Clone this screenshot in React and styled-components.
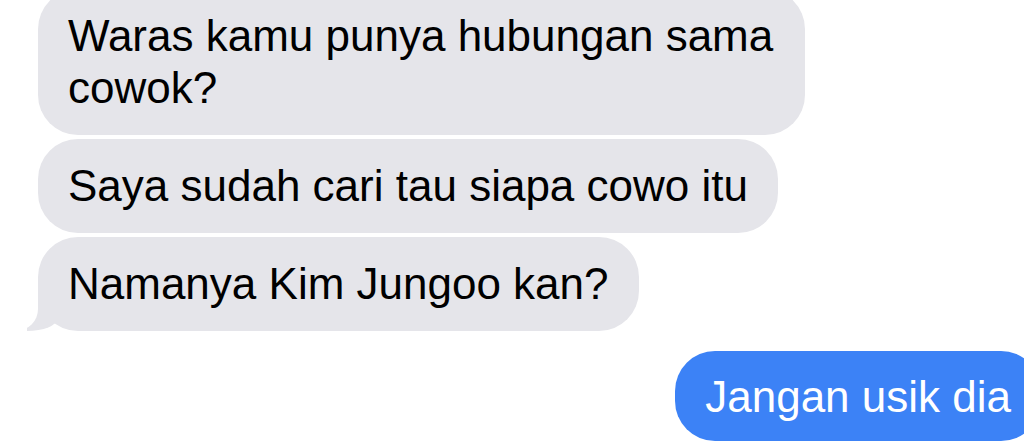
import React from 'react';
import styled, { createGlobalStyle } from 'styled-components';

const GlobalStyle = createGlobalStyle`
  html, body {
    margin: 0;
    padding: 0;
    background: #ffffff;
    overflow: hidden;
  }

  body {
    font-family: "Liberation Sans", Arial, sans-serif;
  }
`;

const Viewport = styled.div`
  width: 1024px;
  height: 448px;
  overflow: hidden;
`;

const Thread = styled.div`
  display: flex;
  flex-direction: column;
  align-items: flex-start;
  gap: 4px;
  box-sizing: border-box;
  padding-left: 38px;
  margin-top: -11px;
`;

const Bubble = styled.div`
  position: relative;
  box-sizing: border-box;
  max-width: 767px;
  padding: ${({ $out }) => ($out ? '20px 30px 18px' : '21px 30px')};
  border-radius: 40px;
  font-size: 44px;
  line-height: 52px;
  color: ${({ $out }) => ($out ? '#ffffff' : '#000000')};
  background: ${({ $out }) => ($out ? '#3c82f6' : '#e5e5ea')};
  align-self: ${({ $out }) => ($out ? 'flex-end' : 'flex-start')};
  margin-top: ${({ $out }) => ($out ? '16px' : '0')};
  margin-right: ${({ $out }) => ($out ? '-17px' : '0')};

  /* tail */
  &::before,
  &::after {
    content: '';
    position: absolute;
    bottom: 0;
    height: 40px;
    display: ${({ $tail }) => ($tail ? 'block' : 'none')};
  }

  &::before {
    z-index: 0;
    width: 30px;
    background: ${({ $out }) => ($out ? '#3c82f6' : '#e5e5ea')};
    ${({ $out }) =>
      $out
        ? 'right: -11px; border-bottom-left-radius: 30px 12px;'
        : 'left: -11px; border-bottom-right-radius: 30px 12px;'}
  }

  &::after {
    z-index: 1;
    width: 40px;
    background: #ffffff;
    ${({ $out }) =>
      $out
        ? 'right: -40px; border-bottom-left-radius: 22px;'
        : 'left: -40px; border-bottom-right-radius: 22px;'}
  }
`;

const Text = styled.span`
  position: relative;
  z-index: 2;
`;

const messages = [
  { text: 'Waras kamu punya hubungan sama cowok?' },
  { text: 'Saya sudah cari tau siapa cowo itu' },
  { text: 'Namanya Kim Jungoo kan?', tail: true },
  { text: 'Jangan usik dia', out: true, tail: true },
];

const App = () => {
  return (
    <>
      <GlobalStyle />
      <Viewport>
        <Thread>
          {messages.map((m, i) => (
            <Bubble key={i} $out={m.out} $tail={m.tail}>
              <Text>{m.text}</Text>
            </Bubble>
          ))}
        </Thread>
      </Viewport>
    </>
  );
};

export default App;
